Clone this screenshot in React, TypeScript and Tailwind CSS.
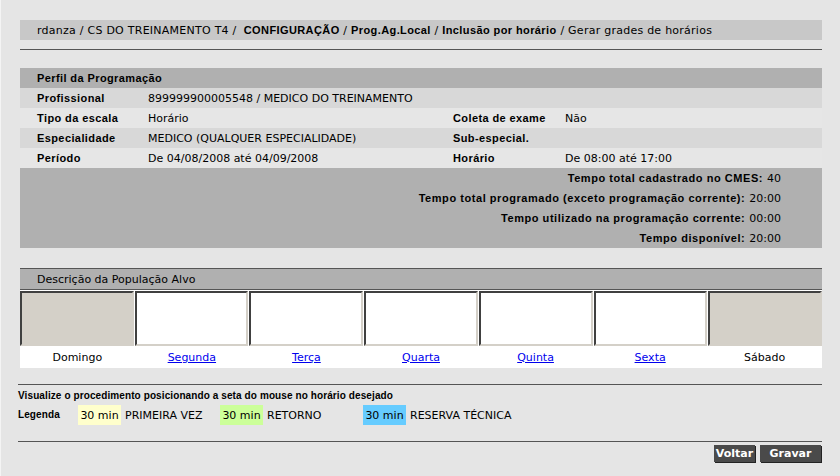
const LINHAS = [
  { rotulo: "Profissional", valor: "899999900005548 / MEDICO DO TREINAMENTO", rotulo2: "", valor2: "", cor: "bg-[#d8d8d8]" },
  { rotulo: "Tipo da escala", valor: "Horário", rotulo2: "Coleta de exame", valor2: "Não", cor: "bg-[#e6e6e6]" },
  { rotulo: "Especialidade", valor: "MEDICO (QUALQUER ESPECIALIDADE)", rotulo2: "Sub-especial.", valor2: "", cor: "bg-[#d8d8d8]" },
  { rotulo: "Período", valor: "De 04/08/2008 até 04/09/2008", rotulo2: "Horário", valor2: "De 08:00 até 17:00", cor: "bg-[#e6e6e6]" },
];

const TEMPOS = [
  ["Tempo total cadastrado no CMES:", "40"],
  ["Tempo total programado (exceto programação corrente):", "20:00"],
  ["Tempo utilizado na programação corrente:", "00:00"],
  ["Tempo disponível:", "20:00"],
];

const DIAS = [
  { nome: "Domingo", link: false },
  { nome: "Segunda", link: true },
  { nome: "Terça", link: true },
  { nome: "Quarta", link: true },
  { nome: "Quinta", link: true },
  { nome: "Sexta", link: true },
  { nome: "Sábado", link: false },
];

const LEGENDA = [
  { cor: "bg-[#ffffcc]", texto: "PRIMEIRA VEZ", largura: "w-[142px]" },
  { cor: "bg-[#ccff99]", texto: "RETORNO", largura: "w-[143px]" },
  { cor: "bg-[#66ccff]", texto: "RESERVA TÉCNICA", largura: "" },
];

// negrito estreito e espaçado, como o Tahoma bold do original
const B = "font-['Liberation_Sans',sans-serif] font-bold tracking-[0.4px]";
const B10 = "font-['Liberation_Sans',sans-serif] text-[10px] font-bold tracking-[0.1px]";

export default function App() {
  return (
    <div className="h-[476px] w-[840px] overflow-hidden border-l border-[#f4f4f4] bg-[#e5e5e5] pl-[19px] pr-[18px] pt-5 font-['DejaVu_Sans',sans-serif] text-[11px] leading-none text-black">
      {/* Trilha de navegação */}
      <div className="flex h-5 items-center bg-[#c8c8c8] pl-[17px] tracking-[0.25px] whitespace-pre">
        <span>rdanza / CS DO TREINAMENTO T4 / </span>
        <span className={B}> CONFIGURAÇÃO</span>
        <span> / </span>
        <span className={B}>Prog.Ag.Local</span>
        <span> / </span>
        <span className={B}>Inclusão por horário</span>
        <span> / Gerar grades de horários</span>
      </div>
      <div className="mt-[9px] border-t border-[#555]" />

      {/* Perfil da Programação */}
      <div className="mt-[18px]">
        <div className={`flex h-5 items-center bg-[#b0b0b0] pl-[17px] ${B}`}>Perfil da Programação</div>
        {LINHAS.map((l) => (
          <div key={l.rotulo} className={`grid h-5 grid-cols-[128px_305px_112px_1fr] items-center ${l.cor}`}>
            <span className={`pl-[17px] ${B}`}>{l.rotulo}</span>
            <span>{l.valor}</span>
            <span className={B}>{l.rotulo2}</span>
            <span>{l.valor2}</span>
          </div>
        ))}
        <div className="bg-[#b0b0b0] pr-[41px]">
          {TEMPOS.map(([r, v]) => (
            <div key={r} className="flex h-5 items-center justify-end gap-1">
              <span className={`${B} tracking-[0.55px]`}>{r}</span>
              <span>{v}</span>
            </div>
          ))}
        </div>
      </div>

      {/* Descrição da População Alvo */}
      <div className="mt-5 bg-white">
        <div className="flex h-[22px] items-center border-y border-[#555] bg-[#b0b0b0] pl-[17px]">
          Descrição da População Alvo
        </div>
        <div className="grid grid-cols-7 gap-[1px] pt-[1px]">
          {DIAS.map((d) => (
            <div
              key={d.nome}
              className={`h-[55px] border-2 border-t-[#404040] border-l-[#404040] border-r-[#d4d0c8] border-b-[#d4d0c8] ${
                d.link ? "bg-white" : "bg-[#d4d0c8]"
              }`}
            />
          ))}
        </div>
        <div className="grid h-[22px] grid-cols-7 items-center text-center">
          {DIAS.map((d) =>
            d.link ? (
              <a key={d.nome} href="#" className="text-[#0000ee] underline">
                {d.nome}
              </a>
            ) : (
              <span key={d.nome}>{d.nome}</span>
            )
          )}
        </div>
      </div>

      {/* Legenda */}
      <div className="ml-[-2px] mt-4 border-t border-[#555] pt-[6px]">
        <div className={B10}>Visualize o procedimento posicionando a seta do mouse no horário desejado</div>
        <div className="mt-[4px] flex h-5 items-center">
          <span className={`w-[60px] ${B10}`}>Legenda</span>
          {LEGENDA.map((item) => (
            <div key={item.texto} className={`flex h-5 items-center ${item.largura}`}>
              <span className={`flex h-5 w-[43px] items-center justify-center ${item.cor}`}>30 min</span>
              <span className="ml-[4px]">{item.texto}</span>
            </div>
          ))}
        </div>
        <div className="mt-4 border-t border-[#555]" />
        <div className="mt-[3px] flex justify-end gap-[5px] pr-[1px]">
          <button className="h-[17px] w-[41px] bg-[#4a4a4a] font-bold text-white shadow-[1px_1px_0_#222]">Voltar</button>
          <button className="h-[17px] w-[61px] bg-[#4a4a4a] font-bold text-white shadow-[1px_1px_0_#222]">Gravar</button>
        </div>
      </div>
    </div>
  );
}
